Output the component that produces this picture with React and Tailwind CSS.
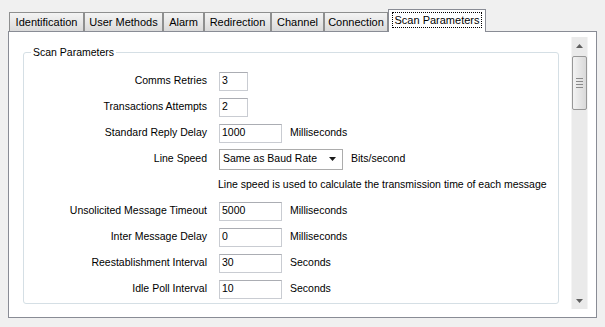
import React from 'react'

const tabs = [
  { label: 'Identification', w: 'w-[75px]' },
  { label: 'User Methods', w: 'w-[79px]' },
  { label: 'Alarm', w: 'w-[41px]' },
  { label: 'Redirection', w: 'w-[67px]' },
  { label: 'Channel', w: 'w-[53px]' },
  { label: 'Connection', w: 'w-[64px]' },
]

const rows = [
  { label: 'Comms Retries', value: '3', size: 'small' },
  { label: 'Transactions Attempts', value: '2', size: 'small' },
  { label: 'Standard Reply Delay', value: '1000', unit: 'Milliseconds' },
  { label: 'Line Speed', select: 'Same as Baud Rate', unit: 'Bits/second' },
  { note: 'Line speed is used to calculate the transmission time of each message' },
  { label: 'Unsolicited Message Timeout', value: '5000', unit: 'Milliseconds' },
  { label: 'Inter Message Delay', value: '0', unit: 'Milliseconds' },
  { label: 'Reestablishment Interval', value: '30', unit: 'Seconds' },
  { label: 'Idle Poll Interval', value: '10', unit: 'Seconds' },
]

function Field({ row }) {
  if (row.note) {
    return (
      <div className="flex items-center h-[26px] pl-[194px] text-[10.5px]">{row.note}</div>
    )
  }
  return (
    <div className="flex items-center h-[26px]">
      <div className="w-[183px] text-right text-[10.5px] shrink-0">{row.label}</div>
      {row.select ? (
        <div className="ml-[12px] w-[124px] h-[21px] border border-[#acacac] bg-white flex items-center pl-[3px] pr-[6px] text-[10.5px]">
          <span className="flex-1">{row.select}</span>
          <svg width="7" height="4" viewBox="0 0 7 4"><path d="M0 0h7L3.5 4z" fill="#1a1a1a" /></svg>
        </div>
      ) : (
        <div className={`ml-[12px] h-[19px] border border-[#c9ccd2] border-t-[#abadb3] bg-white flex items-center pl-[2px] text-[10.5px] ${row.size === 'small' ? 'w-[29px]' : 'w-[63px]'}`}>
          {row.value}
        </div>
      )}
      {row.unit && <span className="ml-[8px] text-[10.5px]">{row.unit}</span>}
    </div>
  )
}

function ScrollBar() {
  return (
    <div className="ml-[12px] mt-[5px] w-[17px] h-[272px] bg-[#eaeaea] border-x border-[#f4f4f4] flex flex-col">
      <div className="h-[17px] flex items-center justify-center">
        <svg width="7" height="4" viewBox="0 0 7 4"><path d="M3.5 0L7 4H0z" fill="#606060" /></svg>
      </div>
      <div className="mt-[2px] h-[54px] rounded-[2px] border border-[#979797] bg-gradient-to-r from-[#f3f3f3] to-[#d9d9d9] flex flex-col items-center justify-center gap-[2px]">
        <div className="w-[7px] h-[1px] bg-[#8a8a8a]" />
        <div className="w-[7px] h-[1px] bg-[#8a8a8a]" />
        <div className="w-[7px] h-[1px] bg-[#8a8a8a]" />
        <div className="w-[7px] h-[1px] bg-[#8a8a8a]" />
      </div>
      <div className="flex-1" />
      <div className="h-[17px] flex items-center justify-center">
        <svg width="7" height="4" viewBox="0 0 7 4"><path d="M0 0h7L3.5 4z" fill="#606060" /></svg>
      </div>
    </div>
  )
}

export default function App() {
  return (
    <div className="w-[605px] h-[327px] bg-[#f0f0f0] pt-[9px] pl-[8px] text-black" style={{ fontFamily: '"Liberation Sans", Arial, sans-serif' }}>
      {/* Tabs */}
      <div className="flex items-end h-[22px] pl-[1px]">
        {tabs.map((t) => (
          <div key={t.label} className={`${t.w} h-[19px] border border-b-0 border-[#8e8f8f] bg-gradient-to-b from-[#f4f4f4] to-[#dadada] flex items-center justify-center text-[11px]`}>
            {t.label}
          </div>
        ))}
        <div className="relative z-10 w-[98px] h-[23px] -mb-[1px] border border-b-0 border-[#898c95] bg-white flex items-start justify-center pt-[2px] text-[11px]">
          <span className="border border-dotted border-black px-[2px] leading-[14px]">Scan Parameters</span>
        </div>
      </div>

      {/* Panel */}
      <div className="w-[589px] h-[287px] border border-[#898c95] bg-white flex items-start">
        <div className="relative ml-[14px] mt-[20px] w-[536px] h-[252px] border border-[#d5dfe5] rounded-[3px] pt-[15px]">
          <span className="absolute -top-[8px] left-[7px] bg-white px-[2px] text-[10.5px]">Scan Parameters</span>
          {rows.map((r, i) => (
            <Field key={i} row={r} />
          ))}
        </div>
        <ScrollBar />
      </div>
    </div>
  )
}
